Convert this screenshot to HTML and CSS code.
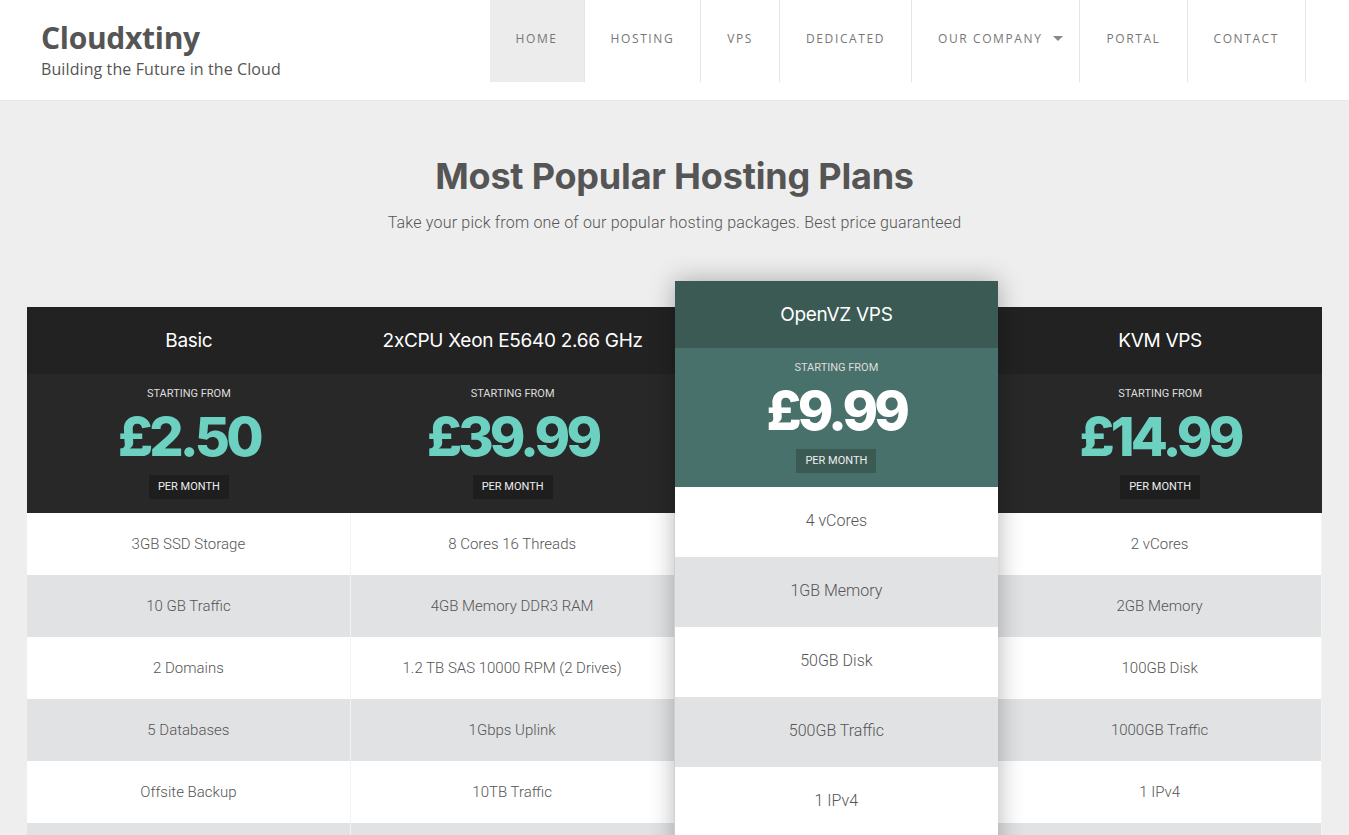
FILE: index.html
```html
<!DOCTYPE html>
<html lang="en">
<head>
    <meta charset="UTF-8">
    <title>Cloudxtiny - Building the Future in the Cloud</title>
    <link rel="stylesheet" href="styles.css">
</head>
<body>
    <header class="site-header">
        <div class="brand">
            <div class="brand-name">Cloudxtiny</div>
            <div class="brand-tagline">Building the Future in the Cloud</div>
        </div>
        <nav class="main-nav">
            <a class="nav-item active" href="#">Home</a>
            <a class="nav-item" href="#">Hosting</a>
            <a class="nav-item" href="#">VPS</a>
            <a class="nav-item" href="#">Dedicated</a>
            <a class="nav-item has-menu" href="#">Our Company <span class="caret"></span></a>
            <a class="nav-item" href="#">Portal</a>
            <a class="nav-item" href="#">Contact</a>
        </nav>
    </header>

    <section class="pricing">
        <h1 class="pricing-title">Most Popular Hosting Plans</h1>
        <p class="pricing-subtitle">Take your pick from one of our popular hosting packages. Best price guaranteed</p>

        <div class="plans">
            <div class="plan">
                <div class="plan-name">Basic</div>
                <div class="plan-price">
                    <div class="price-label">Starting from</div>
                    <div class="price">£2.50</div>
                    <div class="price-period">Per month</div>
                </div>
                <ul class="plan-features">
                    <li>3GB SSD Storage</li>
                    <li>10 GB Traffic</li>
                    <li>2 Domains</li>
                    <li>5 Databases</li>
                    <li>Offsite Backup</li>
                    <li></li>
                </ul>
            </div>

            <div class="plan">
                <div class="plan-name">2xCPU Xeon E5640 2.66 GHz</div>
                <div class="plan-price">
                    <div class="price-label">Starting from</div>
                    <div class="price">£39.99</div>
                    <div class="price-period">Per month</div>
                </div>
                <ul class="plan-features">
                    <li>8 Cores 16 Threads</li>
                    <li>4GB Memory DDR3 RAM</li>
                    <li>1.2 TB SAS 10000 RPM (2 Drives)</li>
                    <li>1Gbps Uplink</li>
                    <li>10TB Traffic</li>
                    <li></li>
                </ul>
            </div>

            <div class="plan featured">
                <div class="plan-name">OpenVZ VPS</div>
                <div class="plan-price">
                    <div class="price-label">Starting from</div>
                    <div class="price">£9.99</div>
                    <div class="price-period">Per month</div>
                </div>
                <ul class="plan-features">
                    <li>4 vCores</li>
                    <li>1GB Memory</li>
                    <li>50GB Disk</li>
                    <li>500GB Traffic</li>
                    <li>1 IPv4</li>
                    <li></li>
                </ul>
            </div>

            <div class="plan">
                <div class="plan-name">KVM VPS</div>
                <div class="plan-price">
                    <div class="price-label">Starting from</div>
                    <div class="price">£14.99</div>
                    <div class="price-period">Per month</div>
                </div>
                <ul class="plan-features">
                    <li>2 vCores</li>
                    <li>2GB Memory</li>
                    <li>100GB Disk</li>
                    <li>1000GB Traffic</li>
                    <li>1 IPv4</li>
                    <li></li>
                </ul>
            </div>
        </div>
    </section>
</body>
</html>
```

FILE: styles.css
```css
* {
    margin: 0;
    padding: 0;
    box-sizing: border-box;
}

body {
    font-family: Roboto, 'Liberation Sans', sans-serif;
    background: #eeeeee;
    color: #555;
    overflow: hidden;
}

/* Header */

.site-header {
    height: 101px;
    background: #fff;
    border-bottom: 1px solid #e8e8e8;
    display: flex;
    justify-content: space-between;
    align-items: flex-start;
    padding: 0 43px 0 41px;
}

.brand {
    padding-top: 19px;
}

.brand-name {
    font-family: 'Open Sans', sans-serif;
    font-size: 30px;
    font-weight: 700;
    line-height: 38px;
    color: #555;
    letter-spacing: -0.3px;
}

.brand-tagline {
    font-family: 'Open Sans', sans-serif;
    font-size: 16px;
    line-height: 24px;
    color: #555;
    letter-spacing: 0.1px;
}

.main-nav {
    display: flex;
    height: 82px;
}

.nav-item {
    display: flex;
    align-items: center;
    padding: 0 26px 6px;
    border-right: 1px solid #e6e6e6;
    font-family: 'Open Sans', sans-serif;
    font-size: 12px;
    letter-spacing: 1.6px;
    text-transform: uppercase;
    color: #777;
    text-decoration: none;
}

.nav-item.has-menu {
    padding-right: 16px;
}

.nav-item.active {
    background: #ebeceb;
}

.caret {
    display: inline-block;
    margin-left: 11px;
    border-left: 5px solid transparent;
    border-right: 5px solid transparent;
    border-top: 5px solid #888;
}

/* Pricing */

.pricing {
    padding-top: 55px;
    text-align: center;
}

.pricing-title {
    font-family: Inter, 'Noto Sans', sans-serif;
    font-size: 36px;
    font-weight: 700;
    line-height: 40px;
    letter-spacing: -0.2px;
    color: #555;
}

.pricing-subtitle {
    margin-top: 15px;
    font-size: 16px;
    font-weight: 300;
    line-height: 24px;
    letter-spacing: 0.2px;
    color: #555;
}

.plans {
    display: flex;
    align-items: flex-start;
    width: 1295px;
    margin: 46px auto 0;
}

.plan {
    flex: 1;
    margin-top: 26px;
}

.plan-name {
    height: 67px;
    display: flex;
    align-items: center;
    justify-content: center;
    background: #222;
    font-family: Inter, 'Noto Sans', sans-serif;
    font-size: 19px;
    letter-spacing: -0.3px;
    color: #fff;
}

.plan-price {
    height: 139px;
    padding-top: 13px;
    background: #282828;
}

.price-label {
    font-size: 11px;
    line-height: 14px;
    text-transform: uppercase;
    color: #ddd;
}

.price {
    margin-top: 6px;
    font-family: Inter, 'Noto Sans', sans-serif;
    font-size: 54px;
    font-weight: 800;
    line-height: 60px;
    letter-spacing: -3.8px;
    color: #6dd1c1;
}

.price-period {
    display: inline-block;
    margin-top: 8px;
    padding: 0 9px;
    font-size: 11px;
    line-height: 24px;
    text-transform: uppercase;
    color: #eee;
    background: #1e1e1e;
}

.plan-features {
    list-style: none;
}

.plan-features li {
    height: 62px;
    display: flex;
    align-items: center;
    justify-content: center;
    font-size: 15px;
    font-weight: 300;
    color: #555;
    background: #fff;
    border-right: 1px solid #f3f3f3;
}

.plan-features li:nth-child(even) {
    background: #e1e2e4;
}

/* Featured plan */

.plan.featured {
    margin-top: 0;
    position: relative;
    z-index: 2;
    box-shadow: 0 0 24px rgba(0, 0, 0, 0.3);
}

.featured .plan-name {
    background: #3b5a54;
}

.featured .plan-price {
    background: #48716b;
}

.featured .price {
    color: #fff;
}

.featured .price-period {
    background: #3b5a54;
}

.featured .plan-features li {
    height: 70px;
    padding-bottom: 3px;
    font-size: 16px;
    border-right: none;
}
```
